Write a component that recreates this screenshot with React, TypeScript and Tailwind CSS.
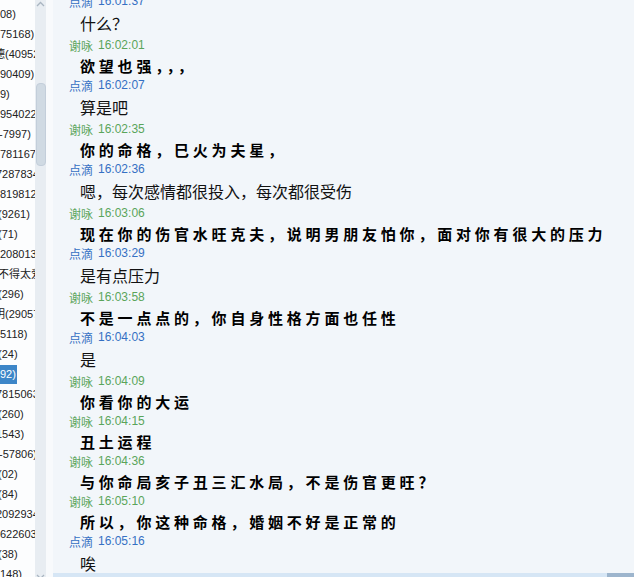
import React from "react";

type Item = { t: string; ml: string; sel?: boolean };

const items: Item[] = [
  { t: "08)", ml: "ml-0" },
  { t: "75168)", ml: "ml-0" },
  { t: "德(40952", ml: "-ml-[6px]" },
  { t: "90409)", ml: "ml-0" },
  { t: "9)", ml: "ml-0" },
  { t: "954022", ml: "ml-0" },
  { t: "-7997)", ml: "-ml-[1px]" },
  { t: "781167", ml: "ml-0" },
  { t: "7287834", ml: "-ml-[4px]" },
  { t: "819812", ml: "ml-0" },
  { t: "(9261)", ml: "-ml-[2px]" },
  { t: "(71)", ml: "-ml-[2px]" },
  { t: "208013", ml: "ml-0" },
  { t: "不得太爱", ml: "-ml-[2px]" },
  { t: "(296)", ml: "-ml-[2px]" },
  { t: "明(29057", ml: "-ml-[6px]" },
  { t: "5118)", ml: "ml-0" },
  { t: "(24)", ml: "-ml-[2px]" },
  { t: "92)", ml: "ml-0", sel: true },
  { t: "7815063", ml: "-ml-[4px]" },
  { t: "(260)", ml: "-ml-[2px]" },
  { t: "1543)", ml: "-ml-[4px]" },
  { t: "-57806)", ml: "-ml-[1px]" },
  { t: "(02)", ml: "-ml-[2px]" },
  { t: "(84)", ml: "-ml-[2px]" },
  { t: "2092934", ml: "-ml-[4px]" },
  { t: "622603", ml: "ml-0" },
  { t: "(38)", ml: "-ml-[2px]" },
  { t: "148)", ml: "ml-0" },
];

type Msg = { who: "a" | "b"; time: string; text: string };

const msgs: Msg[] = [
  { who: "a", time: "16:01:37", text: "什么？" },
  { who: "b", time: "16:02:01", text: "欲望也强，，，" },
  { who: "a", time: "16:02:07", text: "算是吧" },
  { who: "b", time: "16:02:35", text: "你的命格，巳火为夫星，" },
  { who: "a", time: "16:02:36", text: "嗯，每次感情都很投入，每次都很受伤" },
  { who: "b", time: "16:03:06", text: "现在你的伤官水旺克夫，说明男朋友怕你，面对你有很大的压力" },
  { who: "a", time: "16:03:29", text: "是有点压力" },
  { who: "b", time: "16:03:58", text: "不是一点点的，你自身性格方面也任性" },
  { who: "a", time: "16:04:03", text: "是" },
  { who: "b", time: "16:04:09", text: "你看你的大运" },
  { who: "b", time: "16:04:15", text: "丑土运程" },
  { who: "b", time: "16:04:36", text: "与你命局亥子丑三汇水局，不是伤官更旺？" },
  { who: "b", time: "16:05:10", text: "所以，你这种命格，婚姻不好是正常的" },
  { who: "a", time: "16:05:16", text: "唉" },
];

const cjk = "font-['Noto_Sans_CJK_SC',sans-serif]";

export default function App() {
  return (
    <div className="w-[634px] h-[577px] overflow-hidden flex bg-[#f2f6fa]">
      {/* left list */}
      <div className="w-[35px] shrink-0 h-full overflow-hidden bg-[#fcfdfe] pt-[4px] font-['Liberation_Sans','Noto_Sans_CJK_SC',sans-serif] text-[11px] text-[#222]">
        {items.map((it, i) => (
          <div key={i} className="h-[20px] flex items-center whitespace-nowrap overflow-hidden">
            <span
              className={`${it.ml} leading-[19px] ${it.sel ? "bg-[#3d86c8] text-white pr-[1px]" : ""}`}
            >
              {it.t}
            </span>
          </div>
        ))}
      </div>
      {/* scrollbar */}
      <div className="w-[11px] shrink-0 h-full bg-[#e8edf2] flex flex-col items-center">
        <svg width="9" height="6" viewBox="0 0 9 6" className="mt-[1px]">
          <path d="M1 5 L4.5 1.5 L8 5" stroke="#a9b5c1" strokeWidth="1.3" fill="none" />
        </svg>
        <div className="mt-[76px] w-[10px] h-[83px] rounded-[4px] bg-[#d0dae3] border border-[#c3ceda]" />
        <div className="flex-1" />
        <svg width="9" height="6" viewBox="0 0 9 6" className="mb-[-3px]">
          <path d="M1 1 L4.5 4.5 L8 1" stroke="#a9b5c1" strokeWidth="1.3" fill="none" />
        </svg>
      </div>
      <div className="w-[7px] shrink-0 h-full bg-[#f8fafc]" />
      {/* chat */}
      <div className="flex-1 h-full flex flex-col overflow-hidden">
        <div className="flex-1 overflow-hidden">
          <div className="mt-[-8px] pl-[16px]">
            {msgs.map((m, i) => (
              <div key={i}>
                <div
                  className={`h-[19px] flex items-center text-[12px] whitespace-nowrap ${
                    m.who === "a" ? "text-[#3570c3]" : "text-[#5aa55a]"
                  }`}
                >
                  <span className={`${cjk} leading-[19px]`}>{m.who === "a" ? "点滴" : "谢咏"}</span>
                  <span className="ml-[5px] font-['Liberation_Sans',sans-serif] leading-[19px]">{m.time}</span>
                </div>
                {m.who === "a" ? (
                  <div className={`h-[25px] pl-[11px] ${cjk} text-[16px] leading-[25px] text-[#111] whitespace-nowrap`}>
                    {m.text}
                  </div>
                ) : (
                  <div
                    className={`h-[21px] pl-[11px] ${cjk} font-bold text-[15px] leading-[21px] tracking-[3.8px] text-black whitespace-nowrap`}
                  >
                    {m.text}
                  </div>
                )}
              </div>
            ))}
          </div>
        </div>
        <div className="h-[4px] shrink-0 flex">
          <div className="flex-1 bg-[#d6e6f5]" />
          <div className="w-[27px] bg-[#9db5cd]" />
        </div>
      </div>
    </div>
  );
}
